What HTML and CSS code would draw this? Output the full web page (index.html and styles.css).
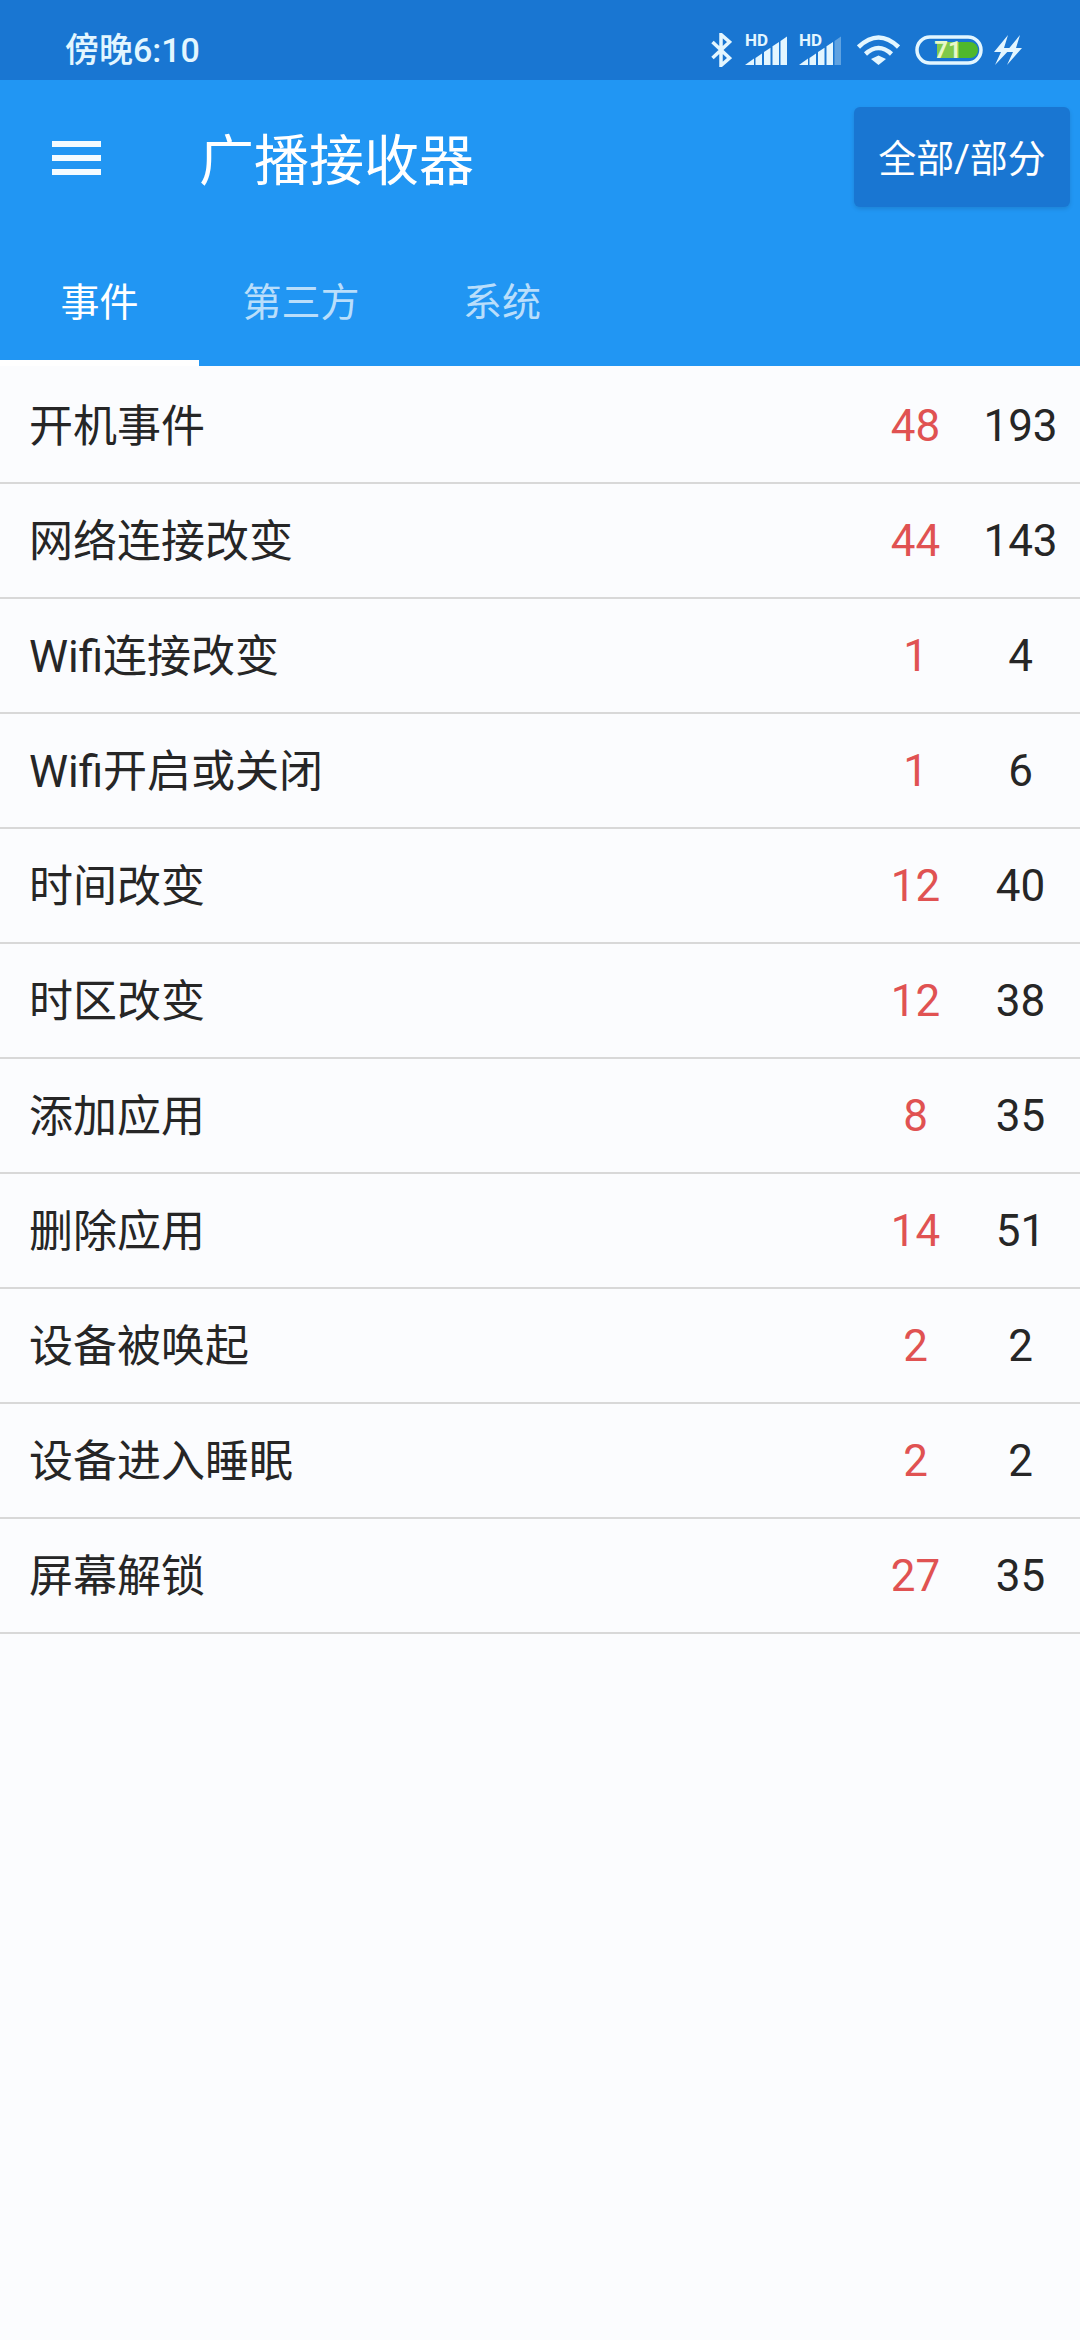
FILE: index.html
```html
<!DOCTYPE html>
<html lang="zh-CN">
<head>
    <meta charset="UTF-8">
    <meta name="viewport" content="width=device-width, initial-scale=1.0">
    <title>广播接收器</title>
    <link rel="stylesheet" href="styles.css">
</head>
<body>
    <div class="status-bar">
        <span class="status-time">傍晚6:10</span>
        <div class="status-icons">
            <svg class="icon-bt" viewBox="0 0 21 34"><path d="M1.5 9 L18.5 25 L10 32.5 V1.5 L18.5 9 L1.5 25"/></svg>
            <svg class="icon-signal" viewBox="0 -6 42 36">
                <text x="0" y="11">HD</text>
                <polygon points="0,30 9,23.5 9,30"/>
                <polygon points="10.5,22.9 17,18.4 17,30 10.5,30"/>
                <polygon points="19,17 25.5,12.7 25.5,30 19,30"/>
                <polygon points="27.5,11.3 34,6.9 34,30 27.5,30"/>
                <polygon points="35.5,5.9 42,1.4 42,30 35.5,30"/>
            </svg>
            <svg class="icon-signal" viewBox="0 -6 42 36">
                <text x="0" y="11">HD</text>
                <polygon points="0,30 9,23.5 9,30"/>
                <polygon points="10.5,22.9 17,18.4 17,30 10.5,30"/>
                <polygon points="19,17 25.5,12.7 25.5,30 19,30"/>
                <polygon points="27.5,11.3 34,6.9 34,30 27.5,30"/>
                <polygon class="bar-dim" points="35.5,5.9 42,1.4 42,30 35.5,30"/>
            </svg>
            <svg class="icon-wifi" viewBox="0 0 43 30">
                <path d="M1.5 12 Q21.5 -7 41.5 12"/>
                <path d="M8.5 19 Q21.5 7 34.5 19"/>
                <polygon class="wifi-dot" points="14,24 21.5,20.5 29,24 21.5,30"/>
            </svg>
            <svg class="icon-battery" viewBox="0 0 68 30">
                <rect class="batt-shell" x="2" y="2" width="64" height="26" rx="13"/>
                <path class="batt-fill" d="M22 7 H55 A8 8 0 0 1 55 23 H22 Z"/>
                <rect class="batt-under" x="22" y="7" width="22" height="16"/>
                <text x="33" y="23">71</text>
            </svg>
            <svg class="icon-charge" viewBox="0 0 29 30">
                <polygon points="15,0 1,17 8,17 2,30 18,13 11,13"/>
                <polygon points="27,0 13,17 20,17 14,30 29,13 23,13"/>
            </svg>
        </div>
    </div>

    <div class="app-bar">
        <div class="toolbar">
            <svg class="menu-icon" viewBox="0 0 49 34"><path d="M0 3 H49 M0 17 H49 M0 31 H49"/></svg>
            <h1 class="title">广播接收器</h1>
            <div class="filter-btn">全部/部分</div>
        </div>
        <div class="tabs">
            <div class="tab active">事件</div>
            <div class="tab">第三方</div>
            <div class="tab">系统</div>
        </div>
    </div>

    <div class="list">
        <div class="row"><span class="name">开机事件</span><span class="num red">48</span><span class="num">193</span></div>
        <div class="row"><span class="name">网络连接改变</span><span class="num red">44</span><span class="num">143</span></div>
        <div class="row"><span class="name">Wifi连接改变</span><span class="num red">1</span><span class="num">4</span></div>
        <div class="row"><span class="name">Wifi开启或关闭</span><span class="num red">1</span><span class="num">6</span></div>
        <div class="row"><span class="name">时间改变</span><span class="num red">12</span><span class="num">40</span></div>
        <div class="row"><span class="name">时区改变</span><span class="num red">12</span><span class="num">38</span></div>
        <div class="row"><span class="name">添加应用</span><span class="num red">8</span><span class="num">35</span></div>
        <div class="row"><span class="name">删除应用</span><span class="num red">14</span><span class="num">51</span></div>
        <div class="row"><span class="name">设备被唤起</span><span class="num red">2</span><span class="num">2</span></div>
        <div class="row"><span class="name">设备进入睡眠</span><span class="num red">2</span><span class="num">2</span></div>
        <div class="row"><span class="name">屏幕解锁</span><span class="num red">27</span><span class="num">35</span></div>
    </div>
</body>
</html>
```

FILE: styles.css
```css
* {
    box-sizing: border-box;
}

body {
    margin: 0;
    height: 2340px;
    overflow: hidden;
    font-family: Roboto, "Noto Sans CJK SC", sans-serif;
    background: #fbfcfe;
    color: #262626;
}

/* status bar */
.status-bar {
    height: 80px;
    padding: 20px 58px 0 65px;
    display: flex;
    align-items: center;
    justify-content: space-between;
    background: #1976d2;
    color: #e3f6ff;
}

.status-time {
    padding-bottom: 6px;
    font-size: 34px;
    font-weight: 500;
}

.status-icons {
    display: flex;
    align-items: center;
}

.status-icons svg {
    display: block;
    height: 30px;
    fill: #e3f6ff;
    stroke: none;
}

.status-icons text {
    font-family: Roboto, sans-serif;
    font-weight: 700;
}

.status-icons .icon-bt {
    width: 21px;
    height: 34px;
    fill: none;
    stroke: #e3f6ff;
    stroke-width: 3.5;
}

.status-icons .icon-signal {
    width: 42px;
    height: 36px;
    margin: -6px 0 0 12px;
}

.icon-signal text {
    font-size: 17px;
}

.status-icons svg:nth-child(2) {
    margin-left: 13px;
}

.bar-dim {
    opacity: 0.35;
}

.status-icons .icon-wifi {
    width: 43px;
    margin-left: 16px;
    fill: none;
    stroke: #e3f6ff;
    stroke-width: 4.5;
}

.icon-wifi .wifi-dot {
    fill: #e3f6ff;
    stroke: none;
}

.icon-battery {
    width: 68px;
    margin-left: 15px;
}

.batt-shell {
    fill: none;
    stroke: #e3f6ff;
    stroke-width: 3.5;
}

.batt-fill {
    fill: #4fb82c;
}

.batt-under {
    fill: #7fc94a;
}

.icon-battery text {
    font-size: 24px;
    text-anchor: middle;
    fill: #e8f8c8;
}

.icon-charge {
    width: 29px;
    margin-left: 10px;
}

/* app bar */
.app-bar {
    height: 286px;
    background: #2196f3;
    color: #fff;
}

.toolbar {
    height: 154px;
    padding: 0 10px 0 52px;
    display: flex;
    align-items: center;
}

.menu-icon {
    width: 49px;
    height: 34px;
    margin: 2px 98px 0 0;
    stroke: #f4fbff;
    stroke-width: 6;
}

.title {
    flex: 1;
    margin: 0 0 3px;
    font-size: 55px;
    font-weight: 400;
}

.filter-btn {
    width: 216px;
    height: 100px;
    padding-bottom: 4px;
    display: flex;
    align-items: center;
    justify-content: center;
    font-size: 38px;
    background: #1976d2;
    border-radius: 6px;
    box-shadow: 0 2px 4px rgba(0, 0, 0, 0.12);
}

.tabs {
    height: 132px;
    display: grid;
    grid-template-columns: 199px 204px 198px;
}

.tab {
    padding-bottom: 3px;
    display: flex;
    align-items: center;
    justify-content: center;
    font-size: 39px;
    color: rgba(255, 255, 255, 0.7);
}

.tab.active {
    color: #fff;
    box-shadow: inset 0 -6px 0 #fff;
}

/* list */
.list {
    padding-top: 3px;
}

.row {
    height: 115px;
    padding: 0 7px 0 29px;
    display: flex;
    align-items: center;
    font-size: 44px;
    border-bottom: 2px solid #d8d8d8;
}

.name {
    flex: 1;
    padding-bottom: 5px;
}

.num {
    width: 105px;
    text-align: center;
}

.red {
    color: #e05252;
}
```
